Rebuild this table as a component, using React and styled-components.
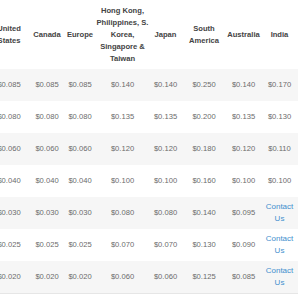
import React from 'react';
import styled, { createGlobalStyle } from 'styled-components';

const GlobalStyle = createGlobalStyle`
    html, body {
        margin: 0;
        padding: 0;
        background: #ffffff;
        overflow: hidden;
    }
`;

const columns = [
    { label: 'United States', width: 42 },
    { label: 'Canada', width: 34 },
    { label: 'Europe', width: 32 },
    { label: 'Hong Kong, Philippines, S. Korea, Singapore & Taiwan', width: 53 },
    { label: 'Japan', width: 33 },
    { label: 'South America', width: 44 },
    { label: 'Australia', width: 35 },
    { label: 'India', width: 37 },
];

const rows = [
    ['$0.085', '$0.085', '$0.085', '$0.140', '$0.140', '$0.250', '$0.140', '$0.170'],
    ['$0.080', '$0.080', '$0.080', '$0.135', '$0.135', '$0.200', '$0.135', '$0.130'],
    ['$0.060', '$0.060', '$0.060', '$0.120', '$0.120', '$0.180', '$0.120', '$0.110'],
    ['$0.040', '$0.040', '$0.040', '$0.100', '$0.100', '$0.160', '$0.100', '$0.100'],
    ['$0.030', '$0.030', '$0.030', '$0.080', '$0.080', '$0.140', '$0.095', null],
    ['$0.025', '$0.025', '$0.025', '$0.070', '$0.070', '$0.130', '$0.090', null],
    ['$0.020', '$0.020', '$0.020', '$0.060', '$0.060', '$0.125', '$0.085', null],
];

const App = () => {
    return (
        <Wrap>
            <GlobalStyle />
            <Table>
                <colgroup>
                    {columns.map((c) => (
                        <col key={c.label} style={{ width: c.width }} />
                    ))}
                </colgroup>
                <thead>
                    <tr>
                        {columns.map((c) => (
                            <Head key={c.label}>{c.label}</Head>
                        ))}
                    </tr>
                </thead>
                <tbody>
                    {rows.map((r, i) => (
                        <Row key={i} $striped={i % 2 === 0}>
                            {r.map((v, j) => (
                                <Cell key={j}>
                                    {v === null ? <Link href="#">Contact Us</Link> : v}
                                </Cell>
                            ))}
                        </Row>
                    ))}
                </tbody>
            </Table>
        </Wrap>
    );
};

const Wrap = styled.div`
    width: 300px;
    height: 300px;
    overflow: hidden;
    font-family: "Liberation Sans", Arial, sans-serif;
`;

const Table = styled.table`
    margin-left: -12px;
    width: 310px;
    table-layout: fixed;
    border-collapse: collapse;
    border-bottom: 1px solid #e6e6e6;
`;

const Head = styled.th`
    height: 69px;
    padding: 0;
    font-size: 7.6px;
    line-height: 12px;
    font-weight: bold;
    color: #444444;
    text-align: center;
    vertical-align: middle;
`;

const Row = styled.tr`
    background: ${(p) => (p.$striped ? '#f6f6f6' : '#ffffff')};
`;

const Cell = styled.td`
    height: 32px;
    padding: 0;
    font-size: 7.6px;
    line-height: 12px;
    color: #6b6b6b;
    text-align: center;
    vertical-align: middle;
`;

const Link = styled.a`
    color: #3f8fce;
    text-decoration: none;
    font-size: 8px;
`;

export default App;
